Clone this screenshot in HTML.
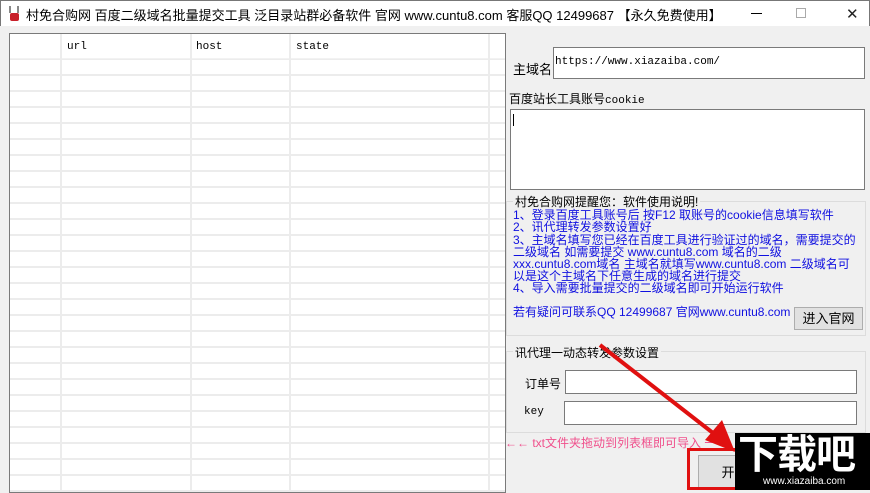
<!DOCTYPE html>
<html><head><meta charset="utf-8"><style>
*{margin:0;padding:0;box-sizing:border-box}
body{width:870px;height:490px;overflow:hidden;background:#f0f0f0;font-family:"Liberation Sans","Noto Sans CJK SC",sans-serif;position:relative;font-size:12px;color:#000}
.a{position:absolute;white-space:nowrap}
#title{left:0;top:0;width:870px;height:26px;background:#fff;border:1px solid #777;border-bottom:none}
#list{left:9px;top:33px;width:497px;height:460px;background:#fff;border:1px solid #7a7a7a;overflow:hidden;
background-image:repeating-linear-gradient(to bottom,transparent 0 14px,#ececec 14px 16px);background-position:0 10px}
.col{position:absolute;top:0;bottom:0;width:2px;background:#ececec}
.hd{position:absolute;top:0;left:0;right:0;height:25px;background:#fff;border-bottom:1px solid #f2f2f2}
.mono{font-family:"Liberation Mono","Noto Sans CJK SC",monospace}
.inp{position:absolute;background:#fff;border:1px solid #7a7a7a}
.blue{color:#1010e0;font-size:12px;line-height:12px;font-family:"Liberation Sans","Noto Sans CJK SC",sans-serif}
.grp{position:absolute;border:1px solid #dcdcdc}
.btn{position:absolute;background:#e1e1e1;border:1px solid #adadad;text-align:center}
</style></head><body>
<div id="title" class="a">
 <div class="a" style="left:6px;top:5px;width:14px;height:16px">
  <div style="position:absolute;left:3px;top:7px;width:9px;height:8px;background:#c8202a;border-radius:2px"></div>
  <div style="position:absolute;left:2px;top:0;width:10px;height:7px;border-left:2px solid #888;border-right:2px solid #888;transform:skew(0)"></div>
 </div>
 <div class="a" style="left:25px;top:4px;font-size:13px">村免合购网 百度二级域名批量提交工具 泛目录站群必备软件 官网 www.cuntu8.com 客服QQ 12499687 【永久免费使用】</div>
 <div class="a" style="left:750px;top:12px;width:11px;height:1px;background:#000"></div>
 <div class="a" style="left:795px;top:7px;width:10px;height:10px;border:1px solid #aaa"></div>
 <div class="a" style="left:845px;top:4px;font-size:15px;color:#222">✕</div>
</div>
<div id="list" class="a">
 <div class="hd"></div>
 <div class="col" style="left:50px"></div>
 <div class="col" style="left:180px"></div>
 <div class="col" style="left:279px"></div>
 <div class="col" style="left:478px"></div>
 <div class="a mono" style="left:57px;top:7px;font-size:11px">url</div>
 <div class="a mono" style="left:186px;top:7px;font-size:11px">host</div>
 <div class="a mono" style="left:286px;top:7px;font-size:11px">state</div>
</div>
<div class="a" style="left:513px;top:59px;font-size:13px">主域名</div>
<div class="inp" style="left:553px;top:47px;width:312px;height:32px"><span class="a mono" style="left:1px;top:8px;font-size:11px">https://www.xiazaiba.com/</span></div>
<div class="a" style="left:509px;top:90px;font-size:12px">百度站长工具账号<span class="mono" style="font-size:11px">cookie</span></div>
<div class="inp" style="left:510px;top:109px;width:355px;height:81px"><div class="a" style="left:2px;top:4px;width:1px;height:12px;background:#000"></div></div>
<div class="grp" style="left:506px;top:201px;width:360px;height:135px"></div>
<div class="a" style="left:513px;top:193px;background:#f0f0f0;padding:0 2px;font-size:12px">村免合购网提醒您：软件使用说明!</div>
<div class="a blue" style="left:513px;top:209px">1、登录百度工具账号后 按F12 取账号的cookie信息填写软件</div>
<div class="a blue" style="left:513px;top:221px">2、讯代理转发参数设置好</div>
<div class="a blue" style="left:513px;top:234px">3、主域名填写您已经在百度工具进行验证过的域名，需要提交的</div>
<div class="a blue" style="left:513px;top:246px">二级域名 如需要提交 www.cuntu8.com 域名的二级</div>
<div class="a blue" style="left:513px;top:258px">xxx.cuntu8.com域名 主域名就填写www.cuntu8.com 二级域名可</div>
<div class="a blue" style="left:513px;top:270px">以是这个主域名下任意生成的域名进行提交</div>
<div class="a blue" style="left:513px;top:282px">4、导入需要批量提交的二级域名即可开始运行软件</div>
<div class="a blue" style="left:513px;top:306px">若有疑问可联系QQ 12499687 官网www.cuntu8.com</div>
<div class="btn" style="left:794px;top:307px;width:69px;height:23px;line-height:21px;font-size:13px">进入官网</div>
<div class="grp" style="left:506px;top:351px;width:360px;height:82px"></div>
<div class="a" style="left:513px;top:344px;background:#f0f0f0;padding:0 2px;font-size:12px">讯代理一动态转发参数设置</div>
<div class="a" style="left:525px;top:375px;font-size:12px">订单号</div>
<div class="inp" style="left:565px;top:370px;width:292px;height:24px"></div>
<div class="a mono" style="left:524px;top:406px;font-size:11px">key</div>
<div class="inp" style="left:564px;top:401px;width:293px;height:24px"></div>
<div class="a" style="left:505px;top:434px;color:#f0508c;font-size:12px">←← txt文件夹拖动到列表框即可导入 一</div>
<div class="btn" style="left:698px;top:455px;width:60px;height:35px;line-height:33px;font-size:13px">开</div>
<div class="a" style="left:687px;top:448px;width:60px;height:42px;border:3px solid #e01010;border-right:none"></div>
<svg class="a" style="left:0;top:0" width="870" height="490"><line x1="600" y1="345" x2="722" y2="440" stroke="#e01010" stroke-width="4"/><polygon points="735,452 705,440 722,420" fill="#e01010"/></svg>
<div class="a" style="left:735px;top:433px;width:135px;height:57px;background:#000">
 <div class="a" style="left:3px;top:0;color:#fff;font-size:40px;font-weight:bold;line-height:44px;letter-spacing:-1px">下载吧</div>
 <div class="a" style="left:28px;top:43px;color:#fff;font-size:10px">www.xiazaiba.com</div>
</div>
</body></html>
